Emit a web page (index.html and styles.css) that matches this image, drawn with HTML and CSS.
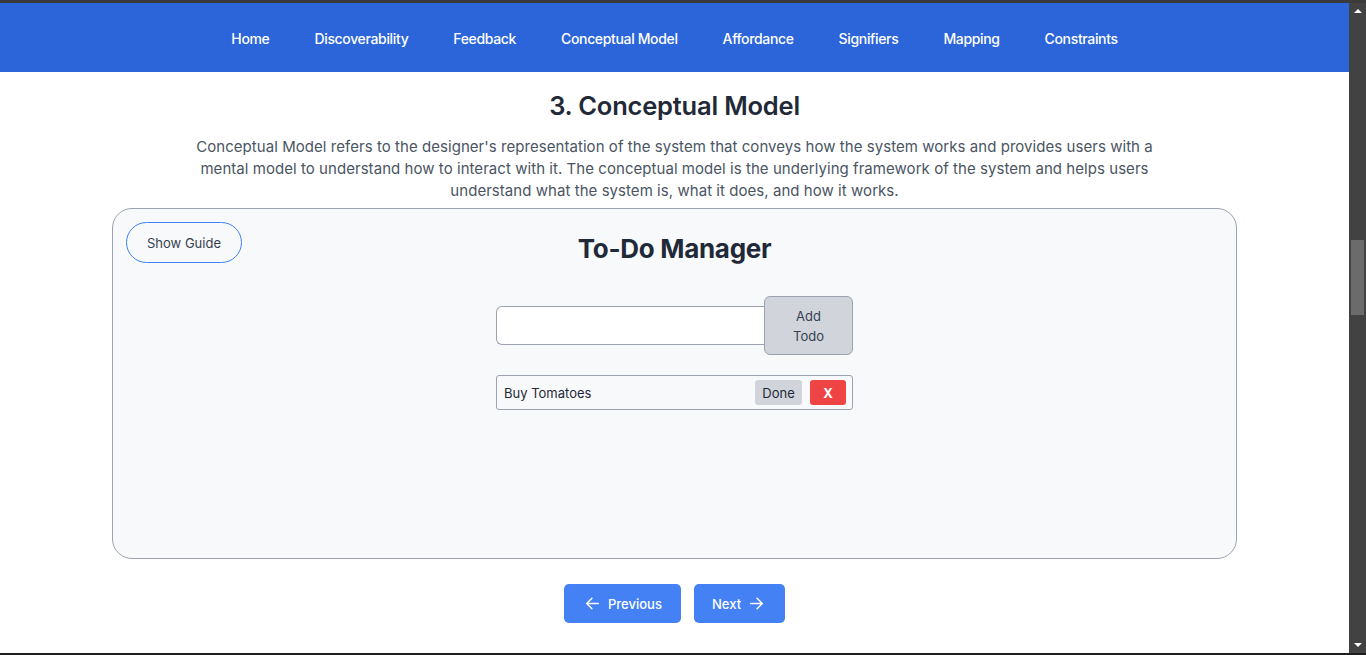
FILE: index.html
```html
<!DOCTYPE html>
<html lang="en">
<head>
<meta charset="utf-8">
<title>Conceptual Model</title>
<link rel="stylesheet" href="styles.css">
</head>
<body>
<div class="window-top"></div>
<div class="viewport">
  <div class="page">
    <nav class="nav">
      <a class="nav-link" href="#">Home</a>
      <a class="nav-link" href="#">Discoverability</a>
      <a class="nav-link" href="#">Feedback</a>
      <a class="nav-link" href="#">Conceptual Model</a>
      <a class="nav-link" href="#">Affordance</a>
      <a class="nav-link" href="#">Signifiers</a>
      <a class="nav-link" href="#">Mapping</a>
      <a class="nav-link" href="#">Constraints</a>
    </nav>
    <main class="content">
      <h2 class="section-title">3. Conceptual Model</h2>
      <p class="intro">Conceptual Model refers to the designer's representation of the system that conveys how the system works and provides users with a mental model to understand how to interact with it. The conceptual model is the underlying framework of the system and helps users understand what the system is, what it does, and how it works.</p>
      <section class="demo-card">
        <button class="guide-btn">Show Guide</button>
        <h3 class="demo-title">To-Do Manager</h3>
        <div class="add-row">
          <input class="todo-input" type="text">
          <button class="add-btn">Add Todo</button>
        </div>
        <div class="todo-item">
          <span class="todo-text">Buy Tomatoes</span>
          <button class="done-btn">Done</button>
          <button class="del-btn">X</button>
        </div>
      </section>
      <div class="pager">
        <button class="pager-btn prev">
          <svg width="17" height="17" viewBox="0 0 16 16" fill="none" stroke="currentColor" stroke-width="1.3" stroke-linecap="round" stroke-linejoin="round"><path d="M13.5 8h-11M7.5 3L2.5 8l5 5"/></svg>
          Previous
        </button>
        <button class="pager-btn next">
          Next
          <svg width="17" height="17" viewBox="0 0 16 16" fill="none" stroke="currentColor" stroke-width="1.3" stroke-linecap="round" stroke-linejoin="round"><path d="M2.5 8h11M8.5 3l5 5-5 5"/></svg>
        </button>
      </div>
    </main>
  </div>
  <div class="scrollbar">
    <div class="sb-arrow up"></div>
    <div class="sb-track"><div class="sb-thumb"></div></div>
    <div class="sb-arrow down"></div>
  </div>
</div>
<div class="window-bottom"></div>
</body>
</html>
```
FILE: styles.css
```css
* { box-sizing: border-box; }
html, body { margin: 0; padding: 0; height: 655px; overflow: hidden; }
body {
  display: flex;
  flex-direction: column;
  font-family: "Inter", "Open Sans", "Liberation Sans", sans-serif;
  background: #ffffff;
}
.window-top { height: 3px; background: #3a3a3a; flex: none; }
.window-bottom { height: 2px; background: #1e1e1e; flex: none; }
.viewport { flex: 1; display: flex; min-height: 0; }
.page { flex: 1; display: flex; flex-direction: column; min-width: 0; overflow: hidden; }

.nav {
  height: 69px;
  padding-top: 2px;
  background: #2b65d9;
  display: flex;
  justify-content: center;
  align-items: center;
  gap: 45px;
  flex: none;
}
.nav-link {
  color: #ffffff;
  text-decoration: none;
  font-size: 14px;
  font-weight: 500;
  letter-spacing: -0.35px;
}

.content {
  display: flex;
  flex-direction: column;
  align-items: center;
}
.section-title {
  margin: 18px 0 0;
  font-size: 25.5px;
  line-height: 32px;
  font-weight: 600;
  color: #1f2937;
  letter-spacing: -0.2px;
}
.intro {
  margin: 14px 0 0;
  max-width: 966px;
  text-align: center;
  font-size: 15px;
  line-height: 22px;
  color: #4b5563;
  letter-spacing: 0.05px;
}

.demo-card {
  position: relative;
  margin-top: 6px;
  width: 1125px;
  height: 351px;
  background: #f8f9fb;
  border: 1px solid #9ca3af;
  border-radius: 20px;
  display: flex;
  flex-direction: column;
  align-items: center;
}
.guide-btn {
  position: absolute;
  top: 13px;
  left: 13px;
  width: 116px;
  height: 41px;
  border: 1px solid #3b82f6;
  border-radius: 21px;
  background: transparent;
  font-family: inherit;
  font-size: 13px;
  color: #374151;
  cursor: pointer;
}
.demo-title {
  margin: 24px 0 0;
  font-size: 26px;
  line-height: 32px;
  font-weight: 700;
  color: #1f2937;
  letter-spacing: -0.3px;
}
.add-row {
  margin-top: 31px;
  display: flex;
  align-items: center;
  width: 357px;
}
.todo-input {
  width: 268px;
  height: 39px;
  border: 1px solid #9ca3af;
  border-right: none;
  border-radius: 6px 0 0 6px;
  background: #ffffff;
}
.add-btn {
  width: 89px;
  height: 59px;
  padding: 0 18px;
  border: 1px solid #9ca3af;
  border-radius: 6px;
  background: #d1d5db;
  font-family: inherit;
  font-size: 13px;
  line-height: 20px;
  color: #374151;
}
.todo-item {
  margin-top: 20px;
  width: 357px;
  height: 35px;
  border: 1px solid #9ca3af;
  border-radius: 3px;
  background: #f8f9fb;
  display: flex;
  align-items: center;
  padding: 0 6px 0 7px;
}
.todo-text {
  flex: 1;
  font-size: 13px;
  color: #1f2937;
}
.done-btn {
  width: 47px;
  height: 25px;
  border: none;
  border-radius: 3px;
  background: #d1d5db;
  font-family: inherit;
  font-size: 13px;
  color: #1f2937;
  padding: 0;
}
.del-btn {
  margin-left: 8px;
  width: 36px;
  height: 25px;
  border: none;
  border-radius: 3px;
  background: #ef4444;
  font-family: inherit;
  font-size: 13px;
  font-weight: 700;
  color: #ffffff;
  padding: 0;
}

.pager {
  margin-top: 25px;
  display: flex;
  gap: 13px;
}
.pager-btn {
  height: 39px;
  border: none;
  border-radius: 5px;
  background: #4481f5;
  color: #ffffff;
  font-family: inherit;
  font-size: 13px;
  font-weight: 500;
  display: flex;
  align-items: center;
  gap: 7px;
}
.pager-btn.prev { width: 117px; padding: 0 0 0 20px; }
.pager-btn.next { width: 91px; padding: 0 0 0 18px; }

.scrollbar {
  width: 17px;
  flex: none;
  background: #424242;
  display: flex;
  flex-direction: column;
  align-items: center;
}
.sb-arrow { width: 0; height: 0; border-left: 4px solid transparent; border-right: 4px solid transparent; }
.sb-arrow.up { margin-top: 6px; border-bottom: 4px solid #ffffff; }
.sb-arrow.down { margin-bottom: 6px; border-top: 4px solid #ffffff; }
.sb-track { flex: 1; width: 100%; padding: 227px 2px 0; }
.sb-thumb { height: 75px; background: #6b6b6b; }
```
